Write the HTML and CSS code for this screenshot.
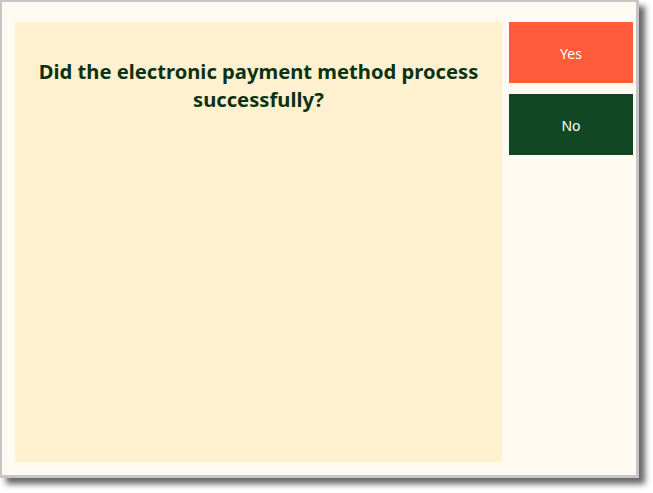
FILE: index.html
```html
<!DOCTYPE html>
<html>
<head>
<meta charset="utf-8">
<link rel="stylesheet" href="styles.css">
</head>
<body>
<div class="window">
  <div class="panel">
    <h1 class="question">Did the electronic payment method process successfully?</h1>
  </div>
  <div class="actions">
    <button class="btn btn-yes">Yes</button>
    <button class="btn btn-no">No</button>
  </div>
</div>
</body>
</html>
```

FILE: styles.css
```css
html, body {
  margin: 0;
  padding: 0;
  background: #ffffff;
}
body {
  width: 653px;
  height: 493px;
  overflow: hidden;
  font-family: "Noto Sans", "Open Sans", sans-serif;
}
.window {
  box-sizing: border-box;
  width: 639px;
  height: 478px;
  background: #fffaf2;
  border-style: solid;
  border-color: #c6c6c6;
  border-width: 2px 3px 3px 2px;
  box-shadow: 6px 6px 6px rgba(0, 0, 0, 0.6);
  padding: 20px 3px 13px 13px;
  display: flex;
  gap: 7px;
}
.panel {
  width: 487px;
  background: #fff1cf;
  padding-top: 35px;
}
.question {
  margin: 0 auto;
  width: 472px;
  text-align: center;
  font-size: 20.2px;
  line-height: 28px;
  font-weight: 700;
  color: #0b3213;
}
.actions {
  width: 124px;
  display: flex;
  flex-direction: column;
  gap: 11px;
}
.btn {
  box-sizing: border-box;
  height: 61px;
  border: none;
  margin: 0;
  padding: 2px 0 0 0;
  font-family: "Noto Sans", "Open Sans", sans-serif;
  font-size: 14px;
  color: #ffffff;
}
.btn-yes {
  background: #ff5a3a;
}
.btn-no {
  background: #114823;
}
```
